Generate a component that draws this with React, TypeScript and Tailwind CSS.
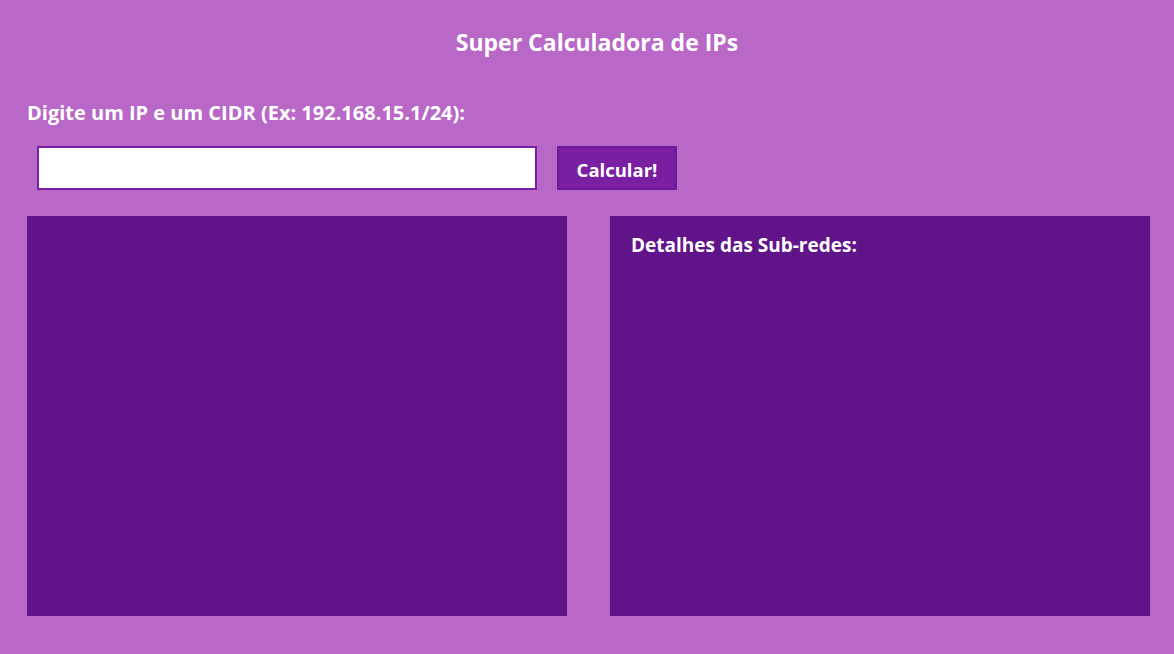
import React, { useState } from 'react';

export default function App() {
  const [ip, setIp] = useState('');

  return (
    <div
      className="min-h-[654px] w-full bg-[#b968c7] text-white"
      style={{ fontFamily: '"Open Sans", "Noto Sans", sans-serif' }}
    >
      <h1 className="pl-[20px] pt-[26px] text-center text-[23px] font-bold leading-[32px]">
        Super Calculadora de IPs
      </h1>

      <div className="pl-[27px] pt-[41px]">
        <label htmlFor="ip" className="block text-[20px] font-bold leading-[28px]">
          Digite um IP e um CIDR (Ex: 192.168.15.1/24):
        </label>

        <div className="mt-[19px] flex items-center gap-5 pl-[10px]">
          <input
            id="ip"
            value={ip}
            onChange={(e) => setIp(e.target.value)}
            className="h-[44px] w-[500px] shrink-0 border-2 border-[#7b1fa2] bg-white px-2 text-black outline-none"
          />
          <button className="h-[44px] w-[120px] shrink-0 border-2 border-[#6a1b9a] bg-[#7b1fa2] pt-[3px] text-[18.5px] font-bold text-white">
            Calcular!
          </button>
        </div>

        <div className="mt-[26px] flex gap-[43px]">
          <div className="h-[400px] w-[540px] shrink-0 bg-[#61148a]" />
          <div className="h-[400px] w-[540px] shrink-0 bg-[#61148a] px-[21px] pt-[16px]">
            <h2 className="text-[19px] font-bold leading-[26px]">Detalhes das Sub-redes:</h2>
          </div>
        </div>
      </div>
    </div>
  );
}
